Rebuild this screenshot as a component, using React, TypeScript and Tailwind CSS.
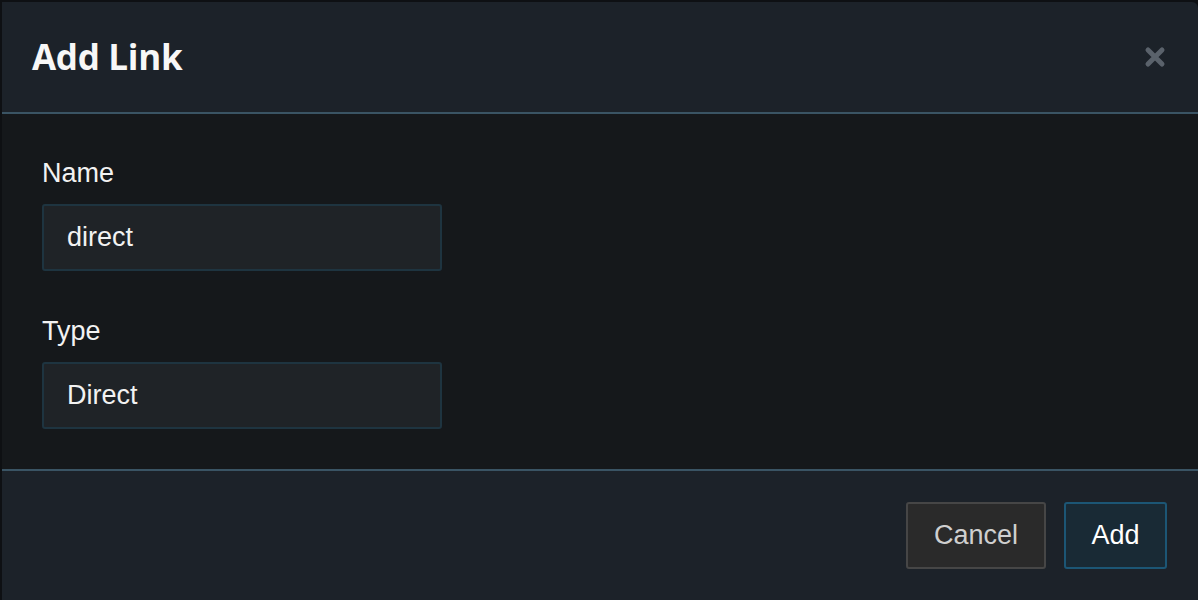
import React from "react";

export default function App() {
  return (
    <div className="w-[1198px] h-[600px] bg-[#0e1013] pt-[2px] pl-[2px] overflow-hidden" style={{ fontFamily: '"Liberation Sans", Arial, sans-serif' }}>
      <div className="w-full h-full rounded-tr-[6px] bg-[#1c2229] flex flex-col overflow-hidden">
        <div className="h-[112px] shrink-0 flex items-center justify-between pl-[30px] pr-[32px] border-b-2 border-[#3a5464]">
          <h1 className="text-[35px] font-bold text-[#f7f7f7] tracking-[-0.3px]" style={{ fontFamily: '"Open Sans", sans-serif' }}>Add Link</h1>
          <svg width="22" height="22" viewBox="0 0 22 22" className="-mt-[1px]">
            <path d="M4 4 L18 18 M18 4 L4 18" stroke="#5a626b" strokeWidth="5" strokeLinecap="round" />
          </svg>
        </div>
        <div className="shrink-0 bg-[#15181b] pl-[40px] pt-[44px] pb-[40px] flex flex-col">
          <label className="text-[27px] leading-[30px] text-[#f2f2f2]">Name</label>
          <div className="mt-[16px] w-[400px] h-[67px] rounded-[3px] border-2 border-[#1e3440] bg-[#1f2327] flex items-center pl-[23px] text-[27px] text-[#f2f2f2]">direct</div>
          <label className="mt-[45px] text-[27px] leading-[30px] text-[#f2f2f2]">Type</label>
          <div className="mt-[16px] w-[400px] h-[67px] rounded-[3px] border-2 border-[#1e3440] bg-[#1f2327] flex items-center pl-[23px] text-[27px] text-[#f2f2f2]">Direct</div>
        </div>
        <div className="flex-1 border-t-2 border-[#3a5464] flex items-start justify-end gap-[18px] pr-[31px] pt-[31px]">
          <button className="w-[140px] h-[67px] rounded-[3px] border-2 border-[#464646] bg-[#2a2a2a] text-[27px] text-[#cfcfcf]">Cancel</button>
          <button className="w-[103px] h-[67px] rounded-[3px] border-2 border-[#1c5675] bg-[#192a35] text-[27px] text-white">Add</button>
        </div>
      </div>
    </div>
  );
}
